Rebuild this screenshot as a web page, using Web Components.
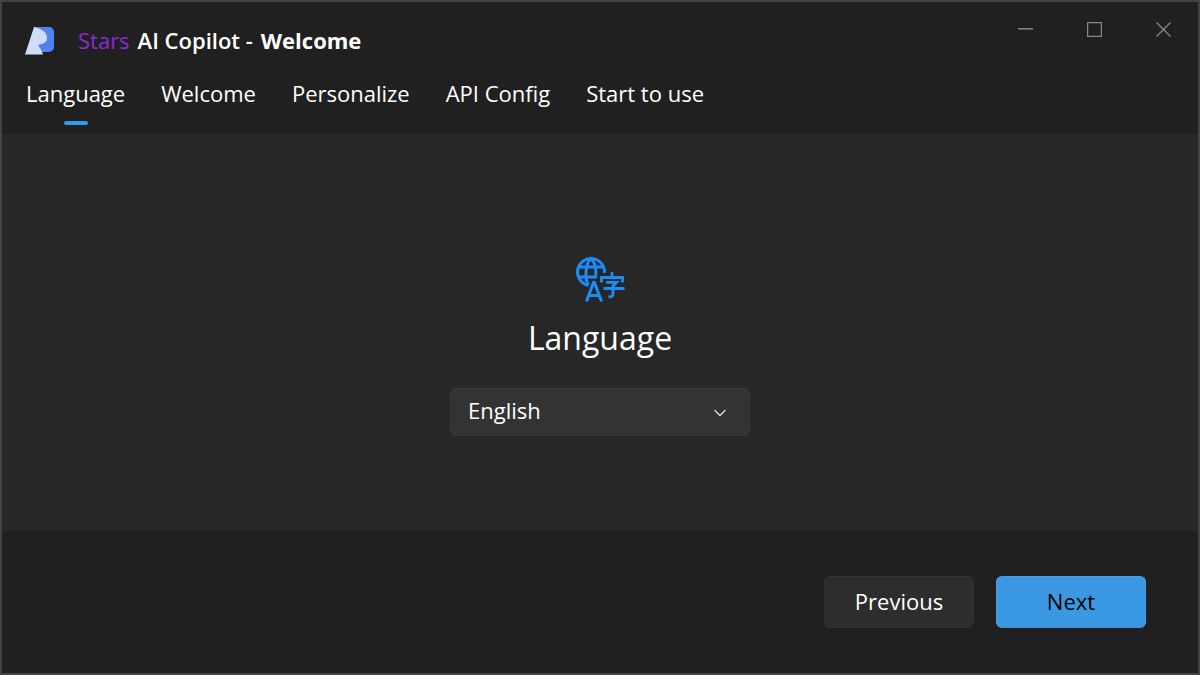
<!DOCTYPE html>
<html lang="en">
<head>
<meta charset="utf-8">
<title>Stars AI Copilot - Welcome</title>
<style>
body { margin: 0; background: #202020; color: #fff; font: 22px/32px "Open Sans", "Noto Sans", sans-serif; }
</style>
</head>
<body>
<app-window>
  <title-bar slot="title"><span slot="accent">Stars</span><span slot="name">AI Copilot -</span><span slot="page">Welcome</span></title-bar>
  <step-nav slot="nav">
    <step-tab current>Language</step-tab>
    <step-tab>Welcome</step-tab>
    <step-tab>Personalize</step-tab>
    <step-tab>API Config</step-tab>
    <step-tab>Start to use</step-tab>
  </step-nav>
  <language-panel>Language</language-panel>
  <wizard-footer slot="footer">
    <wizard-button>Previous</wizard-button>
    <wizard-button primary>Next</wizard-button>
  </wizard-footer>
</app-window>
<script>
function define(name, html) {
  const template = document.createElement('template');
  template.innerHTML = html;
  customElements.define(name, class extends HTMLElement {
    constructor() {
      super();
      this.attachShadow({ mode: 'open' }).append(template.content.cloneNode(true));
    }
  });
}

define('app-window', `
<style>
:host { box-sizing: border-box; min-height: 100vh; display: flex; flex-direction: column; border: 2px solid #444; background: #202020; }
main { flex: 1; display: flex; align-items: center; justify-content: center; padding-top: 28px; background: #272727; }
header { border-bottom: 1px solid #1d1d1d; }
</style>
<header><slot name="title"></slot><slot name="nav"></slot></header>
<main><slot></slot></main>
<slot name="footer"></slot>`);

define('title-bar', `
<style>
:host { display: flex; justify-content: space-between; align-items: flex-start; }
.brand { display: flex; align-items: center; padding: 22px 0 0 22px; }
svg { display: block; }
h1 { margin: 0 0 0 22px; font-size: 22px; line-height: 32px; font-weight: 600; display: flex; gap: 8px; }
.accent { color: #8a2bd8; font-weight: 400; }
.page { font-weight: 700; }
</style>
<div class="brand">
  <svg width="32" height="32" viewBox="0 0 32 32" aria-hidden="true">
    <path d="M10 3H25a5 5 0 0 1 5 5V23a5 5 0 0 1-5 5H17L10 14Z" fill="#5083f1"/>
    <path d="M10 3C18 5 23 8 23 14C23 18 19 20 14 21C16 24 18 27 19 30.500H1Z" fill="#cfddf9"/>
  </svg>
  <h1><span class="accent"><slot name="accent"></slot></span><span><slot name="name"></slot></span><span class="page"><slot name="page"></slot></span></h1>
</div>
<window-controls></window-controls>`);

define('window-controls', `
<style>
:host { display: flex; }
button { width: 69px; height: 54px; padding: 0; border: 0; background: none; display: grid; place-items: center; }
svg { display: block; fill: none; stroke: #858585; }
</style>
<button aria-label="Minimize"><svg width="15" height="15"><path d="M0 6.800H15" stroke-width="1.500"/></svg></button>
<button aria-label="Maximize"><svg width="15" height="15"><path d="M.6 .6H14.400V14.400H.6Z" stroke-width="1.300"/></svg></button>
<button aria-label="Close"><svg width="15" height="15"><path d="M.5 .5L14.500 14.500M14.500 .5L.5 14.500" stroke-width="1.400"/></svg></button>`);

define('step-nav', `
<style>:host { display: block; } nav { display: flex; padding: 21px 6px 0; }</style>
<nav aria-label="Setup steps"><slot></slot></nav>`);

define('step-tab', `
<style>
:host { display: block; }
button { display: flex; flex-direction: column; align-items: center; gap: 12px; padding: 0 18px 7px; border: 0; background: none; color: inherit; font: inherit; white-space: nowrap; }
button::after { content: ""; width: 24px; height: 4px; border-radius: 2px; }
:host([current]) button::after { background: #3b99e4; }
</style>
<button><span><slot></slot></span></button>`);

define('language-panel', `
<style>
:host { display: flex; flex-direction: column; align-items: center; width: 300px; }
svg { display: block; }
label { font-size: 32px; line-height: 44px; margin: 12px 0 28px; }
.field { width: 100%; position: relative; }
select { appearance: none; box-sizing: border-box; width: 100%; height: 48px; padding: 0 48px 4px 17px; border: 1px solid #383838; border-top-color: #3e3e3e; border-radius: 6px; background: #333; color: inherit; font: inherit; display: block; }
.chevron { position: absolute; right: 24px; top: 21px; pointer-events: none; }
</style>
<svg width="50" height="48" viewBox="0 0 50 48" fill="none" stroke="#1c8cfb" stroke-width="3" aria-hidden="true">
  <path d="M13.500 29.300A13.500 13.500 0 1 1 29.500 17"/>
  <path d="M3.500 11H28.500M3.500 21H22M13.500 29C9.500 23 10 8 16 2.500C20 6 21.800 14 20.500 21"/>
  <path d="M11.500 45.500L18.500 26.500H19.500L26.500 45.500M14 39.500H24"/>
  <path d="M37 16V21M26.500 26.500V21.500H47.500V26.500M31 26.300H41.500L38 30V38Q38 41 33.500 41M28.500 32.500H49.500" stroke-width="2.800"/>
</svg>
<label for="language"><slot></slot></label>
<div class="field">
  <select id="language"><option>English</option></select>
  <svg class="chevron" width="12" height="8" viewBox="0 0 12 8" fill="none" stroke="#ddd" stroke-width="1.300" aria-hidden="true"><path d="M.5 1L6 6.500L11.500 1"/></svg>
</div>`);

define('wizard-footer', `
<style>:host { display: flex; justify-content: flex-end; gap: 22px; padding: 45px 52px; }</style>
<slot></slot>`);

define('wizard-button', `
<style>
:host { display: block; }
button { box-sizing: border-box; width: 150px; height: 52px; padding: 0 0 2px; border: 1px solid #313131; border-top-color: #353535; border-radius: 6px; background: #2d2d2d; color: #fff; font: inherit; }
:host([primary]) button { background: #3b99e4; border-color: #4aa1e6; border-bottom-color: #4190cf; color: #000; }
</style>
<button><slot></slot></button>`);
</script>
</body>
</html>
